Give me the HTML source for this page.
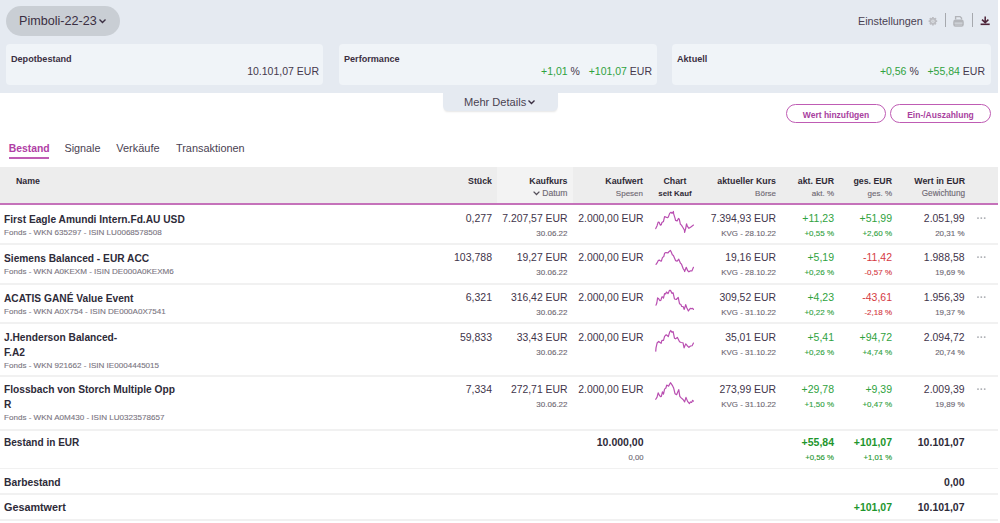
<!DOCTYPE html>
<html><head><meta charset="utf-8"><style>
html,body{margin:0;padding:0;}
body{width:1000px;height:523px;overflow:hidden;position:relative;background:#fff;font-family:"Liberation Sans", sans-serif;}
</style></head><body>
<div style="position:absolute;left:0px;top:0px;width:998px;height:93px;background:#e5eaf1"></div>
<div style="position:absolute;left:6px;top:6px;width:114px;height:30px;background:#c9ced4;border-radius:15px"></div>
<div style="position:absolute;top:11px;font-size:12.6px;line-height:20px;font-weight:400;color:#3b2f42;white-space:nowrap;left:19px;">Pimboli-22-23</div>
<svg style="position:absolute;left:98px;top:17px" width="9" height="8" viewBox="0 0 9 8"><polyline points="1.5,2.5 4.5,5.5 7.5,2.5" fill="none" stroke="#3b2f42" stroke-width="1.4"/></svg>
<div style="position:absolute;top:11px;font-size:10.8px;line-height:20px;font-weight:400;color:#4a4252;white-space:nowrap;left:858px;">Einstellungen</div>
<svg style="position:absolute;left:927px;top:15px" width="12" height="12" viewBox="0 0 12 12"><g transform="translate(5.9,6.2)" fill="#bcbdc2"><rect x="-0.9" y="-4.3" width="1.8" height="1.6" rx="0.3" transform="rotate(0)"/><rect x="-0.9" y="-4.3" width="1.8" height="1.6" rx="0.3" transform="rotate(45)"/><rect x="-0.9" y="-4.3" width="1.8" height="1.6" rx="0.3" transform="rotate(90)"/><rect x="-0.9" y="-4.3" width="1.8" height="1.6" rx="0.3" transform="rotate(135)"/><rect x="-0.9" y="-4.3" width="1.8" height="1.6" rx="0.3" transform="rotate(180)"/><rect x="-0.9" y="-4.3" width="1.8" height="1.6" rx="0.3" transform="rotate(225)"/><rect x="-0.9" y="-4.3" width="1.8" height="1.6" rx="0.3" transform="rotate(270)"/><rect x="-0.9" y="-4.3" width="1.8" height="1.6" rx="0.3" transform="rotate(315)"/><circle r="3.4"/><circle r="1.7" fill="#d9dce1"/><circle r="0.8" fill="#c6c8cc"/></g></svg>
<div style="position:absolute;left:945px;top:13px;width:1px;height:14px;background:#a6a9ae"></div>
<svg style="position:absolute;left:952px;top:15px" width="13" height="13" viewBox="0 0 13 13"><path d="M3.6 4.6 V1.6 H8.0 L9.5 3.1 V4.6" fill="none" stroke="#b2b4b9" stroke-width="1.4"/><path d="M1.2 7 Q1.2 4.6 3.6 4.6 H9.4 Q11.8 4.6 11.8 7 V9.6 Q11.8 11.8 9.6 11.8 H3.4 Q1.2 11.8 1.2 9.6 Z" fill="#b4b6bb"/><rect x="2.6" y="7.6" width="7.8" height="1" fill="#dde1e6"/><rect x="3" y="9.6" width="7" height="0.8" fill="#cfd3d8"/></svg>
<div style="position:absolute;left:972px;top:13px;width:1px;height:14px;background:#a6a9ae"></div>
<svg style="position:absolute;left:979px;top:15px" width="12" height="12" viewBox="0 0 12 12"><path d="M6.2 1.5 V7.6 M3 4.6 L6.2 7.6 L9.4 4.6" fill="none" stroke="#4d2338" stroke-width="1.5"/><line x1="1.6" y1="9.3" x2="10.7" y2="9.3" stroke="#4d2338" stroke-width="1.6"/></svg>
<div style="position:absolute;left:6px;top:44px;width:317px;height:41px;background:#f0f4f8;border-radius:4px"></div>
<div style="position:absolute;top:49px;font-size:9.1px;line-height:20px;font-weight:700;color:#3b2f42;white-space:nowrap;left:11px;">Depotbestand</div>
<div style="position:absolute;left:339px;top:44px;width:318px;height:41px;background:#f0f4f8;border-radius:4px"></div>
<div style="position:absolute;top:49px;font-size:9.1px;line-height:20px;font-weight:700;color:#3b2f42;white-space:nowrap;left:344px;">Performance</div>
<div style="position:absolute;left:672px;top:44px;width:319px;height:41px;background:#f0f4f8;border-radius:4px"></div>
<div style="position:absolute;top:49px;font-size:9.1px;line-height:20px;font-weight:700;color:#3b2f42;white-space:nowrap;left:677px;">Aktuell</div>
<div style="position:absolute;top:61px;font-size:10.5px;line-height:20px;font-weight:400;color:#45384c;white-space:nowrap;right:681px;text-align:right;">10.101,07 EUR</div>
<div style="position:absolute;top:61px;font-size:10.5px;line-height:20px;font-weight:400;color:#45384c;white-space:nowrap;right:348px;text-align:right;"><span style="color:#2fa23e">+1,01</span> %&nbsp;&nbsp;&nbsp;<span style="color:#2fa23e">+101,07</span> EUR</div>
<div style="position:absolute;top:61px;font-size:10.5px;line-height:20px;font-weight:400;color:#45384c;white-space:nowrap;right:15px;text-align:right;"><span style="color:#2fa23e">+0,56</span> %&nbsp;&nbsp;&nbsp;<span style="color:#2fa23e">+55,84</span> EUR</div>
<div style="position:absolute;left:443px;top:92px;width:115px;height:19px;background:#e5eaf1;border-radius:0 0 5px 5px;box-shadow:0 2px 2px -1px rgba(0,0,0,0.10)"></div>
<div style="position:absolute;top:92px;font-size:11.1px;line-height:20px;font-weight:400;color:#4a4252;white-space:nowrap;left:464px;">Mehr Details</div>
<svg style="position:absolute;left:527px;top:98px" width="9" height="8" viewBox="0 0 9 8"><polyline points="1.5,2.5 4.5,5.5 7.5,2.5" fill="none" stroke="#3b2f42" stroke-width="1.4"/></svg>
<div style="position:absolute;left:786px;top:104px;width:100px;height:19px;box-sizing:border-box;border:1.5px solid #bf5cb4;border-radius:10px"></div>
<div style="position:absolute;top:105px;font-size:8.5px;line-height:20px;font-weight:700;color:#a8409e;white-space:nowrap;left:686.0px;width:300px;text-align:center;">Wert hinzufügen</div>
<div style="position:absolute;left:890px;top:104px;width:101px;height:19px;box-sizing:border-box;border:1.5px solid #bf5cb4;border-radius:10px"></div>
<div style="position:absolute;top:105px;font-size:8.5px;line-height:20px;font-weight:700;color:#a8409e;white-space:nowrap;left:790.5px;width:300px;text-align:center;">Ein-/Auszahlung</div>
<div style="position:absolute;top:139px;font-size:10.4px;line-height:20px;font-weight:700;color:#b040a5;white-space:nowrap;left:8.7px;">Bestand</div>
<div style="position:absolute;left:9px;top:157px;width:40px;height:2px;background:#bf5cb4"></div>
<div style="position:absolute;top:138px;font-size:10.8px;line-height:20px;font-weight:400;color:#4a4252;white-space:nowrap;left:64.5px;">Signale</div>
<div style="position:absolute;top:138px;font-size:11px;line-height:20px;font-weight:400;color:#4a4252;white-space:nowrap;left:116.2px;">Verkäufe</div>
<div style="position:absolute;top:138px;font-size:10.9px;line-height:20px;font-weight:400;color:#4a4252;white-space:nowrap;left:176px;">Transaktionen</div>
<div style="position:absolute;left:0px;top:167px;width:998px;height:36px;background:#ededed"></div>
<div style="position:absolute;left:497px;top:167px;width:76px;height:36px;background:#f3f3f3"></div>
<div style="position:absolute;left:0px;top:203px;width:998px;height:2px;background:#c572ba"></div>
<div style="position:absolute;top:171px;font-size:8.8px;line-height:20px;font-weight:700;color:#2f2a36;white-space:nowrap;left:16px;">Name</div>
<div style="position:absolute;top:171px;font-size:8.8px;line-height:20px;font-weight:700;color:#2f2a36;white-space:nowrap;right:508px;text-align:right;">Stück</div>
<div style="position:absolute;top:171px;font-size:8.8px;line-height:20px;font-weight:700;color:#2f2a36;white-space:nowrap;right:432.5px;text-align:right;">Kaufkurs</div>
<div style="position:absolute;top:183px;font-size:8.6px;line-height:20px;font-weight:400;color:#6d6872;white-space:nowrap;-webkit-text-stroke:0.12px #6d6872;right:432.5px;text-align:right;">Datum</div>
<svg style="position:absolute;left:532px;top:189px" width="9" height="8" viewBox="0 0 9 8"><polyline points="1.6,2.6 4.5,5.5 7.4,2.6" fill="none" stroke="#55505a" stroke-width="1.3"/></svg>
<div style="position:absolute;top:171px;font-size:8.8px;line-height:20px;font-weight:700;color:#2f2a36;white-space:nowrap;right:357px;text-align:right;">Kaufwert</div>
<div style="position:absolute;top:184px;font-size:8px;line-height:20px;font-weight:400;color:#6d6872;white-space:nowrap;-webkit-text-stroke:0.12px #6d6872;right:357px;text-align:right;">Spesen</div>
<div style="position:absolute;top:171px;font-size:8.8px;line-height:20px;font-weight:700;color:#2f2a36;white-space:nowrap;left:525px;width:300px;text-align:center;">Chart</div>
<div style="position:absolute;top:184px;font-size:7.9px;line-height:20px;font-weight:700;color:#2f2a36;white-space:nowrap;left:525px;width:300px;text-align:center;">seit Kauf</div>
<div style="position:absolute;top:171px;font-size:8.8px;line-height:20px;font-weight:700;color:#2f2a36;white-space:nowrap;right:224px;text-align:right;">aktueller Kurs</div>
<div style="position:absolute;top:184px;font-size:8px;line-height:20px;font-weight:400;color:#6d6872;white-space:nowrap;-webkit-text-stroke:0.12px #6d6872;right:224px;text-align:right;">Börse</div>
<div style="position:absolute;top:171px;font-size:8.8px;line-height:20px;font-weight:700;color:#2f2a36;white-space:nowrap;right:166px;text-align:right;">akt. EUR</div>
<div style="position:absolute;top:184px;font-size:8px;line-height:20px;font-weight:400;color:#6d6872;white-space:nowrap;-webkit-text-stroke:0.12px #6d6872;right:166px;text-align:right;">akt. %</div>
<div style="position:absolute;top:171px;font-size:8.8px;line-height:20px;font-weight:700;color:#2f2a36;white-space:nowrap;right:108px;text-align:right;">ges. EUR</div>
<div style="position:absolute;top:184px;font-size:8px;line-height:20px;font-weight:400;color:#6d6872;white-space:nowrap;-webkit-text-stroke:0.12px #6d6872;right:108px;text-align:right;">ges. %</div>
<div style="position:absolute;top:171px;font-size:8.8px;line-height:20px;font-weight:700;color:#2f2a36;white-space:nowrap;right:35px;text-align:right;">Wert in EUR</div>
<div style="position:absolute;top:184px;font-size:8.2px;line-height:20px;font-weight:400;color:#6d6872;white-space:nowrap;-webkit-text-stroke:0.12px #6d6872;right:35px;text-align:right;">Gewichtung</div>
<div style="position:absolute;top:210px;font-size:10.2px;line-height:20px;font-weight:700;color:#2e2b39;white-space:nowrap;left:4px;">First Eagle Amundi Intern.Fd.AU USD</div>
<div style="position:absolute;top:223px;font-size:8.07px;line-height:20px;font-weight:400;color:#7a7581;white-space:nowrap;-webkit-text-stroke:0.12px #7a7581;left:4px;">Fonds - WKN 635297 - ISIN LU0068578508</div>
<div style="position:absolute;top:208px;font-size:10.5px;line-height:20px;font-weight:400;color:#41344a;white-space:nowrap;right:508px;text-align:right;">0,277</div>
<div style="position:absolute;top:209px;font-size:10.4px;line-height:20px;font-weight:400;color:#41344a;white-space:nowrap;right:432.5px;text-align:right;">7.207,57 EUR</div>
<div style="position:absolute;top:224px;font-size:8px;line-height:20px;font-weight:400;color:#6d6872;white-space:nowrap;-webkit-text-stroke:0.12px #6d6872;right:432.5px;text-align:right;">30.06.22</div>
<div style="position:absolute;top:209px;font-size:10.4px;line-height:20px;font-weight:400;color:#41344a;white-space:nowrap;right:356.5px;text-align:right;">2.000,00 EUR</div>
<div style="position:absolute;top:209px;font-size:10.4px;line-height:20px;font-weight:400;color:#41344a;white-space:nowrap;right:224px;text-align:right;">7.394,93 EUR</div>
<div style="position:absolute;top:224px;font-size:7.95px;line-height:20px;font-weight:400;color:#6d6872;white-space:nowrap;-webkit-text-stroke:0.12px #6d6872;right:224px;text-align:right;">KVG - 28.10.22</div>
<div style="position:absolute;top:208px;font-size:10.5px;line-height:20px;font-weight:400;color:#2fa23e;white-space:nowrap;right:166px;text-align:right;">+11,23</div>
<div style="position:absolute;top:224px;font-size:8px;line-height:20px;font-weight:400;color:#2fa23e;white-space:nowrap;-webkit-text-stroke:0.12px #2fa23e;right:166px;text-align:right;">+0,55 %</div>
<div style="position:absolute;top:208px;font-size:10.5px;line-height:20px;font-weight:400;color:#2fa23e;white-space:nowrap;right:108px;text-align:right;">+51,99</div>
<div style="position:absolute;top:224px;font-size:8px;line-height:20px;font-weight:400;color:#2fa23e;white-space:nowrap;-webkit-text-stroke:0.12px #2fa23e;right:108px;text-align:right;">+2,60 %</div>
<div style="position:absolute;top:209px;font-size:10.45px;line-height:20px;font-weight:400;color:#41344a;white-space:nowrap;right:35.5px;text-align:right;">2.051,99</div>
<div style="position:absolute;top:224px;font-size:8px;line-height:20px;font-weight:400;color:#6d6872;white-space:nowrap;-webkit-text-stroke:0.12px #6d6872;right:35.5px;text-align:right;">20,31 %</div>
<svg style="position:absolute;left:974px;top:213px" width="14" height="10" viewBox="0 0 14 10"><circle cx="4.0" cy="5.1" r="0.95" fill="#a6a9ae"/><circle cx="7.3" cy="5.1" r="0.95" fill="#a6a9ae"/><circle cx="10.7" cy="5.1" r="0.95" fill="#a6a9ae"/></svg>
<div style="position:absolute;left:0px;top:243px;width:998px;height:2px;background:#f1f1f1"></div>
<div style="position:absolute;top:249px;font-size:10.2px;line-height:20px;font-weight:700;color:#2e2b39;white-space:nowrap;left:4px;">Siemens Balanced - EUR ACC</div>
<div style="position:absolute;top:262px;font-size:8.07px;line-height:20px;font-weight:400;color:#7a7581;white-space:nowrap;-webkit-text-stroke:0.12px #7a7581;left:4px;">Fonds - WKN A0KEXM - ISIN DE000A0KEXM6</div>
<div style="position:absolute;top:247px;font-size:10.5px;line-height:20px;font-weight:400;color:#41344a;white-space:nowrap;right:508px;text-align:right;">103,788</div>
<div style="position:absolute;top:248px;font-size:10.4px;line-height:20px;font-weight:400;color:#41344a;white-space:nowrap;right:432.5px;text-align:right;">19,27 EUR</div>
<div style="position:absolute;top:263px;font-size:8px;line-height:20px;font-weight:400;color:#6d6872;white-space:nowrap;-webkit-text-stroke:0.12px #6d6872;right:432.5px;text-align:right;">30.06.22</div>
<div style="position:absolute;top:248px;font-size:10.4px;line-height:20px;font-weight:400;color:#41344a;white-space:nowrap;right:356.5px;text-align:right;">2.000,00 EUR</div>
<div style="position:absolute;top:248px;font-size:10.4px;line-height:20px;font-weight:400;color:#41344a;white-space:nowrap;right:224px;text-align:right;">19,16 EUR</div>
<div style="position:absolute;top:263px;font-size:7.95px;line-height:20px;font-weight:400;color:#6d6872;white-space:nowrap;-webkit-text-stroke:0.12px #6d6872;right:224px;text-align:right;">KVG - 28.10.22</div>
<div style="position:absolute;top:247px;font-size:10.5px;line-height:20px;font-weight:400;color:#2fa23e;white-space:nowrap;right:166px;text-align:right;">+5,19</div>
<div style="position:absolute;top:263px;font-size:8px;line-height:20px;font-weight:400;color:#2fa23e;white-space:nowrap;-webkit-text-stroke:0.12px #2fa23e;right:166px;text-align:right;">+0,26 %</div>
<div style="position:absolute;top:247px;font-size:10.5px;line-height:20px;font-weight:400;color:#d53a42;white-space:nowrap;right:108px;text-align:right;">-11,42</div>
<div style="position:absolute;top:263px;font-size:8px;line-height:20px;font-weight:400;color:#d53a42;white-space:nowrap;-webkit-text-stroke:0.12px #d53a42;right:108px;text-align:right;">-0,57 %</div>
<div style="position:absolute;top:248px;font-size:10.45px;line-height:20px;font-weight:400;color:#41344a;white-space:nowrap;right:35.5px;text-align:right;">1.988,58</div>
<div style="position:absolute;top:263px;font-size:8px;line-height:20px;font-weight:400;color:#6d6872;white-space:nowrap;-webkit-text-stroke:0.12px #6d6872;right:35.5px;text-align:right;">19,69 %</div>
<svg style="position:absolute;left:974px;top:252px" width="14" height="10" viewBox="0 0 14 10"><circle cx="4.0" cy="5.1" r="0.95" fill="#a6a9ae"/><circle cx="7.3" cy="5.1" r="0.95" fill="#a6a9ae"/><circle cx="10.7" cy="5.1" r="0.95" fill="#a6a9ae"/></svg>
<div style="position:absolute;left:0px;top:283px;width:998px;height:2px;background:#f1f1f1"></div>
<div style="position:absolute;top:289px;font-size:10.2px;line-height:20px;font-weight:700;color:#2e2b39;white-space:nowrap;left:4px;">ACATIS GANÉ Value Event</div>
<div style="position:absolute;top:302px;font-size:8.07px;line-height:20px;font-weight:400;color:#7a7581;white-space:nowrap;-webkit-text-stroke:0.12px #7a7581;left:4px;">Fonds - WKN A0X754 - ISIN DE000A0X7541</div>
<div style="position:absolute;top:287px;font-size:10.5px;line-height:20px;font-weight:400;color:#41344a;white-space:nowrap;right:508px;text-align:right;">6,321</div>
<div style="position:absolute;top:288px;font-size:10.4px;line-height:20px;font-weight:400;color:#41344a;white-space:nowrap;right:432.5px;text-align:right;">316,42 EUR</div>
<div style="position:absolute;top:303px;font-size:8px;line-height:20px;font-weight:400;color:#6d6872;white-space:nowrap;-webkit-text-stroke:0.12px #6d6872;right:432.5px;text-align:right;">30.06.22</div>
<div style="position:absolute;top:288px;font-size:10.4px;line-height:20px;font-weight:400;color:#41344a;white-space:nowrap;right:356.5px;text-align:right;">2.000,00 EUR</div>
<div style="position:absolute;top:288px;font-size:10.4px;line-height:20px;font-weight:400;color:#41344a;white-space:nowrap;right:224px;text-align:right;">309,52 EUR</div>
<div style="position:absolute;top:303px;font-size:7.95px;line-height:20px;font-weight:400;color:#6d6872;white-space:nowrap;-webkit-text-stroke:0.12px #6d6872;right:224px;text-align:right;">KVG - 31.10.22</div>
<div style="position:absolute;top:287px;font-size:10.5px;line-height:20px;font-weight:400;color:#2fa23e;white-space:nowrap;right:166px;text-align:right;">+4,23</div>
<div style="position:absolute;top:303px;font-size:8px;line-height:20px;font-weight:400;color:#2fa23e;white-space:nowrap;-webkit-text-stroke:0.12px #2fa23e;right:166px;text-align:right;">+0,22 %</div>
<div style="position:absolute;top:287px;font-size:10.5px;line-height:20px;font-weight:400;color:#d53a42;white-space:nowrap;right:108px;text-align:right;">-43,61</div>
<div style="position:absolute;top:303px;font-size:8px;line-height:20px;font-weight:400;color:#d53a42;white-space:nowrap;-webkit-text-stroke:0.12px #d53a42;right:108px;text-align:right;">-2,18 %</div>
<div style="position:absolute;top:288px;font-size:10.45px;line-height:20px;font-weight:400;color:#41344a;white-space:nowrap;right:35.5px;text-align:right;">1.956,39</div>
<div style="position:absolute;top:303px;font-size:8px;line-height:20px;font-weight:400;color:#6d6872;white-space:nowrap;-webkit-text-stroke:0.12px #6d6872;right:35.5px;text-align:right;">19,37 %</div>
<svg style="position:absolute;left:974px;top:292px" width="14" height="10" viewBox="0 0 14 10"><circle cx="4.0" cy="5.1" r="0.95" fill="#a6a9ae"/><circle cx="7.3" cy="5.1" r="0.95" fill="#a6a9ae"/><circle cx="10.7" cy="5.1" r="0.95" fill="#a6a9ae"/></svg>
<div style="position:absolute;left:0px;top:322px;width:998px;height:2px;background:#f1f1f1"></div>
<div style="position:absolute;top:328px;font-size:10.2px;line-height:20px;font-weight:700;color:#2e2b39;white-space:nowrap;left:4px;">J.Henderson Balanced-</div>
<div style="position:absolute;top:343px;font-size:10.2px;line-height:20px;font-weight:700;color:#2e2b39;white-space:nowrap;left:4px;">F.A2</div>
<div style="position:absolute;top:356px;font-size:8.07px;line-height:20px;font-weight:400;color:#7a7581;white-space:nowrap;-webkit-text-stroke:0.12px #7a7581;left:4px;">Fonds - WKN 921662 - ISIN IE0004445015</div>
<div style="position:absolute;top:327px;font-size:10.5px;line-height:20px;font-weight:400;color:#41344a;white-space:nowrap;right:508px;text-align:right;">59,833</div>
<div style="position:absolute;top:328px;font-size:10.4px;line-height:20px;font-weight:400;color:#41344a;white-space:nowrap;right:432.5px;text-align:right;">33,43 EUR</div>
<div style="position:absolute;top:343px;font-size:8px;line-height:20px;font-weight:400;color:#6d6872;white-space:nowrap;-webkit-text-stroke:0.12px #6d6872;right:432.5px;text-align:right;">30.06.22</div>
<div style="position:absolute;top:328px;font-size:10.4px;line-height:20px;font-weight:400;color:#41344a;white-space:nowrap;right:356.5px;text-align:right;">2.000,00 EUR</div>
<div style="position:absolute;top:328px;font-size:10.4px;line-height:20px;font-weight:400;color:#41344a;white-space:nowrap;right:224px;text-align:right;">35,01 EUR</div>
<div style="position:absolute;top:343px;font-size:7.95px;line-height:20px;font-weight:400;color:#6d6872;white-space:nowrap;-webkit-text-stroke:0.12px #6d6872;right:224px;text-align:right;">KVG - 31.10.22</div>
<div style="position:absolute;top:327px;font-size:10.5px;line-height:20px;font-weight:400;color:#2fa23e;white-space:nowrap;right:166px;text-align:right;">+5,41</div>
<div style="position:absolute;top:343px;font-size:8px;line-height:20px;font-weight:400;color:#2fa23e;white-space:nowrap;-webkit-text-stroke:0.12px #2fa23e;right:166px;text-align:right;">+0,26 %</div>
<div style="position:absolute;top:327px;font-size:10.5px;line-height:20px;font-weight:400;color:#2fa23e;white-space:nowrap;right:108px;text-align:right;">+94,72</div>
<div style="position:absolute;top:343px;font-size:8px;line-height:20px;font-weight:400;color:#2fa23e;white-space:nowrap;-webkit-text-stroke:0.12px #2fa23e;right:108px;text-align:right;">+4,74 %</div>
<div style="position:absolute;top:328px;font-size:10.45px;line-height:20px;font-weight:400;color:#41344a;white-space:nowrap;right:35.5px;text-align:right;">2.094,72</div>
<div style="position:absolute;top:343px;font-size:8px;line-height:20px;font-weight:400;color:#6d6872;white-space:nowrap;-webkit-text-stroke:0.12px #6d6872;right:35.5px;text-align:right;">20,74 %</div>
<svg style="position:absolute;left:974px;top:332px" width="14" height="10" viewBox="0 0 14 10"><circle cx="4.0" cy="5.1" r="0.95" fill="#a6a9ae"/><circle cx="7.3" cy="5.1" r="0.95" fill="#a6a9ae"/><circle cx="10.7" cy="5.1" r="0.95" fill="#a6a9ae"/></svg>
<div style="position:absolute;left:0px;top:375px;width:998px;height:2px;background:#f1f1f1"></div>
<div style="position:absolute;top:380px;font-size:10.2px;line-height:20px;font-weight:700;color:#2e2b39;white-space:nowrap;left:4px;">Flossbach von Storch Multiple Opp</div>
<div style="position:absolute;top:395px;font-size:10.2px;line-height:20px;font-weight:700;color:#2e2b39;white-space:nowrap;left:4px;">R</div>
<div style="position:absolute;top:408px;font-size:8.07px;line-height:20px;font-weight:400;color:#7a7581;white-space:nowrap;-webkit-text-stroke:0.12px #7a7581;left:4px;">Fonds - WKN A0M430 - ISIN LU0323578657</div>
<div style="position:absolute;top:379px;font-size:10.5px;line-height:20px;font-weight:400;color:#41344a;white-space:nowrap;right:508px;text-align:right;">7,334</div>
<div style="position:absolute;top:380px;font-size:10.4px;line-height:20px;font-weight:400;color:#41344a;white-space:nowrap;right:432.5px;text-align:right;">272,71 EUR</div>
<div style="position:absolute;top:395px;font-size:8px;line-height:20px;font-weight:400;color:#6d6872;white-space:nowrap;-webkit-text-stroke:0.12px #6d6872;right:432.5px;text-align:right;">30.06.22</div>
<div style="position:absolute;top:380px;font-size:10.4px;line-height:20px;font-weight:400;color:#41344a;white-space:nowrap;right:356.5px;text-align:right;">2.000,00 EUR</div>
<div style="position:absolute;top:380px;font-size:10.4px;line-height:20px;font-weight:400;color:#41344a;white-space:nowrap;right:224px;text-align:right;">273,99 EUR</div>
<div style="position:absolute;top:395px;font-size:7.95px;line-height:20px;font-weight:400;color:#6d6872;white-space:nowrap;-webkit-text-stroke:0.12px #6d6872;right:224px;text-align:right;">KVG - 31.10.22</div>
<div style="position:absolute;top:379px;font-size:10.5px;line-height:20px;font-weight:400;color:#2fa23e;white-space:nowrap;right:166px;text-align:right;">+29,78</div>
<div style="position:absolute;top:395px;font-size:8px;line-height:20px;font-weight:400;color:#2fa23e;white-space:nowrap;-webkit-text-stroke:0.12px #2fa23e;right:166px;text-align:right;">+1,50 %</div>
<div style="position:absolute;top:379px;font-size:10.5px;line-height:20px;font-weight:400;color:#2fa23e;white-space:nowrap;right:108px;text-align:right;">+9,39</div>
<div style="position:absolute;top:395px;font-size:8px;line-height:20px;font-weight:400;color:#2fa23e;white-space:nowrap;-webkit-text-stroke:0.12px #2fa23e;right:108px;text-align:right;">+0,47 %</div>
<div style="position:absolute;top:380px;font-size:10.45px;line-height:20px;font-weight:400;color:#41344a;white-space:nowrap;right:35.5px;text-align:right;">2.009,39</div>
<div style="position:absolute;top:395px;font-size:8px;line-height:20px;font-weight:400;color:#6d6872;white-space:nowrap;-webkit-text-stroke:0.12px #6d6872;right:35.5px;text-align:right;">19,89 %</div>
<svg style="position:absolute;left:974px;top:384px" width="14" height="10" viewBox="0 0 14 10"><circle cx="4.0" cy="5.1" r="0.95" fill="#a6a9ae"/><circle cx="7.3" cy="5.1" r="0.95" fill="#a6a9ae"/><circle cx="10.7" cy="5.1" r="0.95" fill="#a6a9ae"/></svg>
<div style="position:absolute;left:0px;top:429px;width:998px;height:2px;background:#f1f1f1"></div>
<svg style="position:absolute;left:650px;top:205px" width="50" height="210"><polyline points="5.75,23.60 7.08,20.66 8.15,17.18 9.22,17.45 10.29,20.12 11.36,19.59 11.90,17.45 13.50,16.38 14.57,11.56 15.91,12.10 17.52,12.63 18.32,12.10 19.66,8.35 20.99,7.28 22.06,8.35 23.40,6.48 23.67,8.89 25.01,13.17 25.54,15.31 27.15,15.84 28.48,13.43 29.29,14.24 30.36,19.05 31.43,20.12 32.77,22.26 34.37,24.94 34.64,27.34 35.71,23.33 36.51,18.78 37.31,21.19 38.92,23.33 40.52,22.26 41.86,21.19 43.47,20.12" fill="none" stroke="#b94fb1" stroke-width="1.2" stroke-linejoin="round" stroke-linecap="round"/><polyline points="6.01,59.32 7.08,57.98 8.15,55.84 9.22,55.04 10.29,55.84 11.36,56.11 12.43,52.63 13.77,51.56 14.57,48.35 15.91,47.55 18.05,47.82 19.12,46.48 20.46,45.41 21.26,47.01 22.33,49.69 23.40,50.49 25.54,55.57 27.15,56.11 28.75,54.24 30.36,57.98 31.43,59.05 33.03,63.33 34.37,65.47 34.64,66.54 36.24,62.26 37.58,65.47 38.92,66.81 40.52,65.74 41.86,66.01 43.47,62.26" fill="none" stroke="#b94fb1" stroke-width="1.2" stroke-linejoin="round" stroke-linecap="round"/><polyline points="6.01,100.12 6.82,97.98 7.62,92.90 8.69,93.70 9.76,95.57 10.83,95.31 11.90,91.83 12.97,92.10 13.50,93.17 14.57,88.62 15.64,88.89 16.45,87.01 18.05,88.62 19.39,85.41 20.46,85.41 22.06,88.35 23.13,87.82 24.47,93.97 26.34,94.50 28.22,92.36 29.55,98.78 30.89,99.59 31.70,101.46 33.30,101.73 34.10,104.40 34.37,104.13 35.71,99.59 36.78,102.80 38.38,106.01 40.26,103.33 41.59,103.60 42.66,103.33 43.47,104.40" fill="none" stroke="#b94fb1" stroke-width="1.2" stroke-linejoin="round" stroke-linecap="round"/><polyline points="5.75,146.08 6.01,142.87 7.08,138.05 8.69,136.45 10.03,137.52 11.10,138.32 11.90,135.38 13.50,135.38 14.57,131.36 16.18,129.76 17.52,130.83 18.32,131.63 19.66,127.08 20.73,125.48 22.06,127.35 23.13,126.55 24.47,133.24 25.54,133.77 27.41,132.43 29.55,136.71 31.16,137.52 33.03,137.78 34.10,142.87 35.71,138.85 37.05,140.46 38.92,142.33 40.52,140.99 42.13,140.73 43.47,138.05" fill="none" stroke="#b94fb1" stroke-width="1.2" stroke-linejoin="round" stroke-linecap="round"/><polyline points="5.75,194.26 7.08,192.12 8.15,187.84 9.49,190.52 10.56,191.59 11.36,191.32 12.43,186.77 13.50,189.18 14.57,184.10 15.91,183.03 16.71,180.08 18.59,181.15 20.46,177.68 22.33,180.35 23.13,181.96 23.67,183.03 25.01,188.64 26.61,189.71 28.75,184.63 29.82,191.32 31.16,192.92 33.03,194.53 34.64,196.94 35.98,192.39 37.58,196.40 39.45,198.54 40.52,196.94 41.59,197.47 42.66,195.33 43.47,196.13" fill="none" stroke="#b94fb1" stroke-width="1.2" stroke-linejoin="round" stroke-linecap="round"/></svg>
<div style="position:absolute;top:433px;font-size:10.05px;line-height:20px;font-weight:700;color:#2e2b39;white-space:nowrap;left:4px;">Bestand in EUR</div>
<div style="position:absolute;top:432px;font-size:10.5px;line-height:20px;font-weight:700;color:#2e2b39;white-space:nowrap;right:356.5px;text-align:right;">10.000,00</div>
<div style="position:absolute;top:448px;font-size:7.7px;line-height:20px;font-weight:400;color:#6d6872;white-space:nowrap;-webkit-text-stroke:0.12px #6d6872;right:356.5px;text-align:right;">0,00</div>
<div style="position:absolute;top:432px;font-size:10.5px;line-height:20px;font-weight:700;color:#1e962d;white-space:nowrap;right:166px;text-align:right;">+55,84</div>
<div style="position:absolute;top:448px;font-size:7.8px;line-height:20px;font-weight:400;color:#1e962d;white-space:nowrap;-webkit-text-stroke:0.12px #1e962d;right:166px;text-align:right;">+0,56 %</div>
<div style="position:absolute;top:432px;font-size:10.5px;line-height:20px;font-weight:700;color:#1e962d;white-space:nowrap;right:108px;text-align:right;">+101,07</div>
<div style="position:absolute;top:448px;font-size:7.7px;line-height:20px;font-weight:400;color:#1e962d;white-space:nowrap;-webkit-text-stroke:0.12px #1e962d;right:108px;text-align:right;">+1,01 %</div>
<div style="position:absolute;top:432px;font-size:10.5px;line-height:20px;font-weight:700;color:#2e2b39;white-space:nowrap;right:35.5px;text-align:right;">10.101,07</div>
<div style="position:absolute;left:0px;top:468px;width:998px;height:1px;background:#f1f1f1"></div>
<div style="position:absolute;top:473px;font-size:10.3px;line-height:20px;font-weight:700;color:#2e2b39;white-space:nowrap;left:4px;">Barbestand</div>
<div style="position:absolute;top:472px;font-size:10.5px;line-height:20px;font-weight:700;color:#2e2b39;white-space:nowrap;right:35.5px;text-align:right;">0,00</div>
<div style="position:absolute;left:0px;top:493px;width:998px;height:2px;background:#f1f1f1"></div>
<div style="position:absolute;top:497px;font-size:10.8px;line-height:20px;font-weight:700;color:#2e2b39;white-space:nowrap;left:4px;">Gesamtwert</div>
<div style="position:absolute;top:497px;font-size:10.5px;line-height:20px;font-weight:700;color:#1e962d;white-space:nowrap;right:108px;text-align:right;">+101,07</div>
<div style="position:absolute;top:497px;font-size:10.5px;line-height:20px;font-weight:700;color:#2e2b39;white-space:nowrap;right:35.5px;text-align:right;">10.101,07</div>
<div style="position:absolute;left:0px;top:519px;width:998px;height:2px;background:#f1f1f1"></div>
</body></html>
